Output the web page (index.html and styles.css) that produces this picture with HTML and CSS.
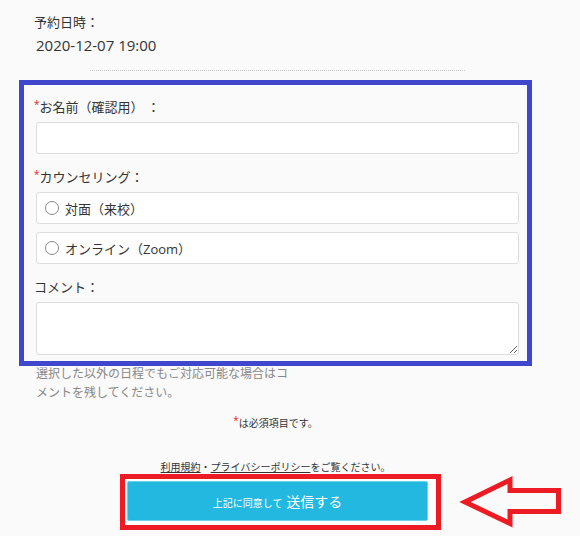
FILE: index.html
```html
<!DOCTYPE html>
<html>
<head>
    <title>予約フォーム</title>
    <link rel="stylesheet" href="styles.css">
</head>
<body>
    <div class="page">
        <div class="reserve">
            <div class="reserve-label">予約日時：</div>
            <div class="reserve-date">2020-12-07 19:00</div>
        </div>
        <div class="divider"></div>

        <form class="entry-form" onsubmit="return false;">
            <div class="field">
                <label class="field-label" for="name"><span class="req">*</span>お名前（確認用）&nbsp;：</label>
                <input type="text" id="name" class="text-input">
            </div>
            <div class="field">
                <div class="field-label"><span class="req">*</span>カウンセリング：</div>
                <label class="radio-row"><input type="radio" name="style" class="radio"><span>対面（来校）</span></label>
                <label class="radio-row"><input type="radio" name="style" class="radio"><span>オンライン（Zoom）</span></label>
            </div>
            <div class="field">
                <label class="field-label" for="comment">コメント：</label>
                <textarea id="comment" class="text-area"></textarea>
            </div>
        </form>

        <p class="note">選択した以外の日程でもご対応可能な場合はコメントを残してください。</p>
        <p class="required"><span class="req">*</span>は必須項目です。</p>
        <p class="terms"><a href="#">利用規約</a>・<a href="#">プライバシーポリシー</a>をご覧ください。</p>

        <div class="submit-box">
            <button type="button" class="submit-btn"><span class="small">上記に同意して</span> 送信する</button>
            <svg class="arrow" width="110" height="60" viewBox="0 0 110 60">
                <polygon points="10,30 55,8 55,18.5 103.5,18.5 103.5,39.5 55,39.5 55,51.5" fill="none" stroke="#ed1c24" stroke-width="5"/>
            </svg>
        </div>
    </div>
</body>
</html>
```

FILE: styles.css
```css
body {
    margin: 0;
    background-color: #fafafa;
    font-family: "Open Sans", "Noto Sans CJK JP", sans-serif;
    color: #333333;
}

.page {
    width: 513px;
    padding-left: 19px;
}

.reserve {
    padding-top: 12px;
}

.reserve-label {
    padding-left: 15px;
    font-size: 13px;
    line-height: 20px;
}

.reserve-date {
    padding-left: 17px;
    margin-top: 3px;
    font-size: 15px;
    line-height: 20px;
}

.divider {
    width: 375px;
    margin: 15px 0 0 71px;
    border-top: 1px dotted #cccccc;
}

.entry-form {
    margin-top: 9px;
    border: 5px solid #3f48cc;
    padding: 12px 8px 6px 10px;
}

.field + .field {
    margin-top: 13px;
}

.field-label {
    display: block;
    font-size: 13px;
    line-height: 20px;
    margin-bottom: 5px;
}

.req {
    color: #ed1c24;
    font-size: 10px;
    vertical-align: top;
    line-height: 14px;
}

.text-input,
.radio-row,
.text-area {
    box-sizing: border-box;
    display: block;
    width: 483px;
    margin-left: 2px;
    border: 1px solid #dddddd;
    border-radius: 3px;
    background-color: #ffffff;
}

.text-input {
    height: 32px;
    font-size: 13px;
}

.radio-row {
    display: flex;
    align-items: center;
    height: 32px;
    padding-left: 8px;
    font-size: 13px;
}

.radio-row + .radio-row {
    margin-top: 8px;
}

.radio {
    appearance: none;
    box-sizing: border-box;
    width: 14px;
    height: 14px;
    margin: 0 6px 0 0;
    border: 1px solid #8a8a8a;
    border-radius: 50%;
    background-color: #ffffff;
}

.radio:checked {
    background: radial-gradient(circle, #555555 0 3px, #ffffff 3.5px);
}

.text-area {
    height: 53px;
    resize: vertical;
    font-family: inherit;
}

.note {
    width: 255px;
    margin: -2px 0 0 17px;
    color: #888888;
    font-size: 12px;
    line-height: 19px;
}

.required {
    margin: 11px 0 0 0;
    text-align: center;
    font-size: 10px;
    line-height: 20px;
}

.terms {
    margin: 27px 0 0 0;
    text-align: center;
    font-size: 10px;
    line-height: 14px;
}

.terms a {
    color: #333333;
}

.submit-box {
    position: relative;
    width: 306px;
    margin-left: 101px;
    padding: 2px 3px 4px 2px;
    border: 5px solid #ed1c24;
    background-color: #ffffff;
}

.submit-btn {
    display: block;
    width: 301px;
    height: 40px;
    border: 1px solid #6fd0ea;
    border-radius: 2px;
    background-color: #22b8df;
    color: #ffffff;
    font-family: inherit;
    font-size: 14px;
    cursor: pointer;
}

.submit-btn .small {
    font-size: 10px;
}

.arrow {
    position: absolute;
    left: 330px;
    top: -7px;
}
```
